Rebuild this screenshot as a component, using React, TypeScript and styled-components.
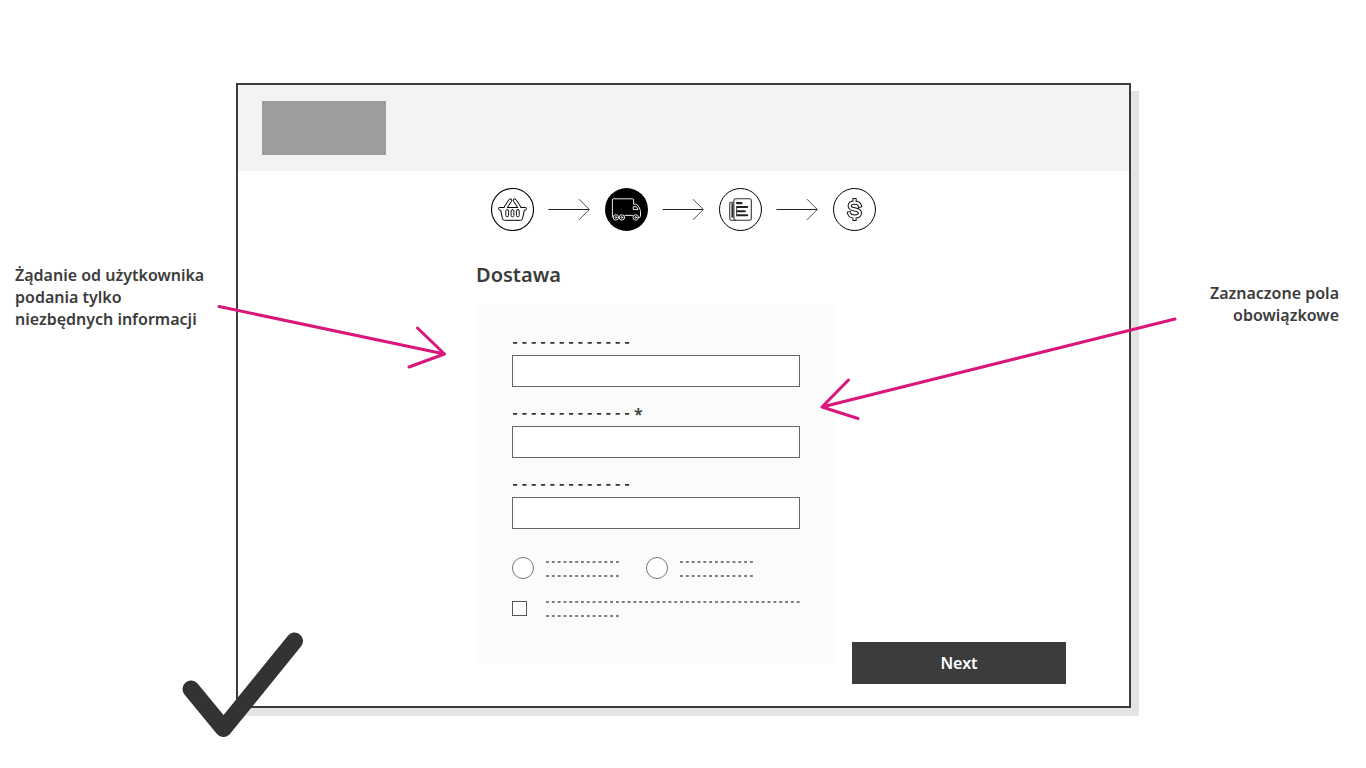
import React from "react";
import styled, { createGlobalStyle } from "styled-components";

const INK = "#3c3c3c";
const ACCENT = "#d9167b";

const GlobalStyle = createGlobalStyle`
  *, *::before, *::after { box-sizing: border-box; }
  body {
    margin: 0;
    background: #fff;
    color: ${INK};
    font-family: "Noto Sans", "Open Sans", sans-serif;
    font-size: 16px;
    line-height: 22px;
  }
`;

const Page = styled.main`
  display: grid;
  grid-template-columns: 236px minmax(0, 1fr) 235px;
  align-items: start;
  padding: 83px 0 48px;
`;

const Note = styled.p<{ $side: "left" | "right" }>`
  margin: 0;
  font-weight: 600;
  text-align: ${({ $side }) => $side};
  padding: ${({ $side }) => ($side === "left" ? "181px 30px 0 15px" : "199px 27px 0 60px")};
`;

const Window = styled.section`
  position: relative;
  border: 2px solid ${INK};
  background: #fff;
  box-shadow: 8px 8px 0 #e4e4e4;
`;

const Header = styled.header`
  padding: 16px 24px;
  background: #f3f3f3;
`;

const Logo = styled.div`
  width: 124px;
  height: 54px;
  background: #9d9d9d;
`;

const Steps = styled.ol`
  display: flex;
  justify-content: center;
  align-items: center;
  gap: 14px;
  margin: 0;
  padding: 17px 0 0;
  list-style: none;
`;

const Step = styled.li`
  display: flex;
  align-items: center;
  gap: 14px;
`;

const StepIcon = styled.svg`
  display: block;
  width: 43px;
  height: 43px;
  fill: none;
  stroke-linecap: round;
  stroke-linejoin: round;
`;

const StepArrow = styled.svg`
  display: block;
  width: 43px;
  height: 23px;
  fill: none;
  stroke: #222;
`;

const Content = styled.div`
  display: grid;
  grid-template-columns: minmax(0, 238fr) 360px minmax(0, 293fr);
  align-items: end;
  padding: 30px 0 22px;
`;

const Delivery = styled.div`
  grid-column: 2;
  padding-bottom: 20px;
`;

const Title = styled.h1`
  margin: 0 0 15px;
  font-size: 20px;
  font-weight: 600;
  line-height: 28px;
`;

const Panel = styled.form`
  position: relative;
  padding: 27px 36px 47px;
  background: #fbfbfb;
`;

const Fields = styled.div`
  display: grid;
  gap: 15px;
`;

const FieldLabel = styled.label`
  display: flex;
  align-items: center;
  gap: 4px;
  height: 24px;
  padding-left: 1px;
  font-weight: 600;
`;

const TextInput = styled.input`
  display: block;
  width: 100%;
  height: 32px;
  margin: 0;
  padding: 0 8px;
  border: 1px solid #666;
  border-radius: 0;
  background: #fff;
  font: inherit;
  color: inherit;
`;

const Radios = styled.div`
  display: grid;
  grid-template-columns: 134px 1fr;
  margin-top: 28px;
`;

const Option = styled.div`
  display: grid;
  grid-template-columns: 34px 1fr;
  align-items: center;
`;

const ConsentOption = styled(Option)`
  margin-top: 20px;
`;

const Radio = styled.input`
  appearance: none;
  width: 22px;
  height: 22px;
  margin: 0;
  border: 1px solid #777;
  border-radius: 50%;
  background: #fff;
  &:checked { background: ${INK}; box-shadow: inset 0 0 0 4px #fff; }
`;

const Checkbox = styled.input`
  appearance: none;
  width: 15px;
  height: 15px;
  margin: 0;
  border: 1px solid #555;
  background: #fff;
  &:checked { background: ${INK}; box-shadow: inset 0 0 0 3px #fff; }
`;

const OptionLabel = styled.label`
  display: grid;
  gap: 12px;
  padding-top: 2px;
`;

const DashSvg = styled.svg`
  display: block;
  flex: none;
`;

const NextButton = styled.button`
  width: 214px;
  height: 42px;
  margin-left: 16px;
  border: 0;
  background: ${INK};
  color: #fff;
  font: inherit;
  font-weight: 600;
  cursor: pointer;
`;

const Pointer = styled.svg<{ $side: "left" | "right" }>`
  position: absolute;
  top: ${({ $side }) => ($side === "left" ? "0" : "10px")};
  ${({ $side }) => ($side === "left" ? "right: calc(100% + 28px);" : "left: calc(100% - 18px);")}
  fill: none;
  stroke: ${ACCENT};
  stroke-width: 3;
  stroke-linecap: round;
  stroke-linejoin: round;
  pointer-events: none;
`;

const CheckMark = styled.svg`
  position: absolute;
  left: -58px;
  bottom: -34px;
  fill: none;
  stroke: #333;
  stroke-width: 17;
  stroke-linecap: round;
  stroke-linejoin: round;
`;

function LabelDashes() {
  return (
    <DashSvg width="117" height="2" aria-hidden="true">
      <path d="M0 0.9H117" stroke="#333" strokeWidth="1.8" strokeDasharray="4.2 5.13" />
    </DashSvg>
  );
}

function TextDashes({ width }: { width: number }) {
  return (
    <DashSvg width={width} height="2" aria-hidden="true">
      <path d={`M0 1H${width}`} stroke="#555" strokeWidth="1.5" strokeDasharray="2.9 2.93" />
    </DashSvg>
  );
}

function Field({ id, required }: { id: string; required?: boolean }) {
  return (
    <div>
      <FieldLabel htmlFor={id}>
        <LabelDashes />
        {required && <span>*</span>}
      </FieldLabel>
      <TextInput id={id} name={id} type="text" required={required} />
    </div>
  );
}

function RadioOption({ id }: { id: string }) {
  return (
    <Option>
      <Radio id={id} type="radio" name="method" value={id} />
      <OptionLabel htmlFor={id}>
        <TextDashes width={73} />
        <TextDashes width={73} />
      </OptionLabel>
    </Option>
  );
}

function BasketIcon() {
  return (
    <StepIcon viewBox="0 0 43 43" stroke="#000" aria-hidden="true">
      <circle cx="21.5" cy="21.5" r="21" strokeWidth="1.1" />
      <g strokeWidth="1">
        <path d="M13 19.5H8.3Q7.5 19.5 7.6 20.4L7.8 21.5Q8 22.2 8.8 22.2H9.7L11.5 30.8Q11.9 32.3 13.4 32.3H29.6Q31.1 32.3 31.5 30.8L33.3 22.2H34.2Q35 22.2 35.2 21.5L35.4 20.4Q35.5 19.5 34.7 19.5H30" />
        <path d="M16.4 19.5H26.6" />
        <path d="M12.9 19.5L18 11.5Q18.9 10.3 20.2 11.1Q21.3 12 20.5 13.2L16.4 19.5" />
        <path d="M30.1 19.5L25 11.5Q24.1 10.3 22.8 11.1Q21.7 12 22.5 13.2L26.6 19.5" />
      </g>
      <g strokeWidth="0.9">
        <rect x="14.8" y="21.6" width="2.8" height="7.2" rx="1.4" />
        <rect x="20.1" y="21.6" width="2.8" height="7.2" rx="1.4" />
        <rect x="25.4" y="21.6" width="2.8" height="7.2" rx="1.4" />
      </g>
    </StepIcon>
  );
}

function TruckIcon() {
  return (
    <StepIcon viewBox="0 0 43 43" stroke="#fff" aria-hidden="true">
      <circle cx="21.5" cy="21.5" r="21.5" fill="#000" stroke="none" />
      <g strokeWidth="0.9">
        <path d="M8 29.5Q7.4 29.3 7.4 28.5V12Q7.4 10.8 8.6 10.8H27.4Q28.6 10.8 28.6 12V16.2H30.4Q32.4 16.4 33.6 18.6L35 21.4Q35.5 22.4 35.5 23.5V28.2Q35.5 29.5 34 29.5" />
        <path d="M20 27.4H27.6" />
        <path d="M28.6 18.7H31Q32.4 19.1 33 21.5H28.6Z" />
        <circle cx="10.9" cy="29.4" r="2.7" />
        <circle cx="10.9" cy="29.4" r="0.8" />
        <circle cx="16.9" cy="29.4" r="2.7" />
        <circle cx="16.9" cy="29.4" r="0.8" />
        <circle cx="30.7" cy="29.4" r="2.7" />
        <circle cx="30.7" cy="29.4" r="0.8" />
      </g>
    </StepIcon>
  );
}

function DocumentIcon() {
  return (
    <StepIcon viewBox="0 0 43 43" stroke="#000" aria-hidden="true">
      <circle cx="21.5" cy="21.5" r="21" strokeWidth="1" />
      <rect x="14.9" y="10.7" width="17.4" height="21.5" rx="1.8" strokeWidth="1.1" stroke="#333" />
      <path d="M14 14.2H12.2Q10.7 14.2 10.7 15.7V30.4Q10.7 32.2 12.5 32.2H17" strokeWidth="1.1" stroke="#333" />
      <path d="M13.4 15.2V29.6" strokeWidth="2" strokeLinecap="butt" stroke="#333" />
      <path d="M18 15.1H22.6M18 19H28.2M18 23.2H25.8M18 27.3H28.2" strokeWidth="2.1" stroke="#222" />
      <path d="M17.6 18.4V28" strokeWidth="1" stroke="#444" />
    </StepIcon>
  );
}

function DollarIcon() {
  const curve =
    "M21.5 12.2V14.5M21.5 28.5V30.900M26.8 17.6Q26 14.6 21.7 14.6Q16.7 14.6 16.7 17.9Q16.7 20.500 21.6 21.4Q26.900 22.3 26.900 25.1Q26.900 28.5 21.7 28.5Q16.900 28.5 16.2 25.4";
  return (
    <StepIcon viewBox="0 0 43 43" aria-hidden="true">
      <circle cx="21.5" cy="21.5" r="21" strokeWidth="1" stroke="#000" />
      <path d={curve} stroke="#111" strokeWidth="4.2" strokeLinecap="square" />
      <path d={curve} stroke="#fff" strokeWidth="2.2" strokeLinecap="square" />
    </StepIcon>
  );
}

const steps = [BasketIcon, TruckIcon, DocumentIcon, DollarIcon];

export default function App() {
  return (
    <>
      <GlobalStyle />
      <Page>
        <Note $side="left">Żądanie od użytkownika podania tylko niezbędnych informacji</Note>
        <Window>
          <Header>
            <Logo />
          </Header>
          <Steps>
            {steps.map((Icon, i) => (
              <Step key={i} aria-current={i === 1 ? "step" : undefined}>
                <Icon />
                {i < steps.length - 1 && (
                  <StepArrow viewBox="0 0 43 23" aria-hidden="true">
                    <path d="M0.5 11.5H41" />
                    <path d="M31 1.2L41.3 11.5L31 21.8" strokeWidth="0.8" />
                  </StepArrow>
                )}
              </Step>
            ))}
          </Steps>
          <Content>
            <Delivery>
              <Title>Dostawa</Title>
              <Panel id="delivery">
                <Fields>
                  <Field id="name" />
                  <Field id="address" required />
                  <Field id="city" />
                </Fields>
                <Radios>
                  <RadioOption id="courier" />
                  <RadioOption id="pickup" />
                </Radios>
                <ConsentOption>
                  <Checkbox id="consent" name="consent" type="checkbox" />
                  <OptionLabel htmlFor="consent">
                    <TextDashes width={254} />
                    <TextDashes width={73} />
                  </OptionLabel>
                </ConsentOption>
                <Pointer $side="left" width="232" height="68" aria-hidden="true">
                  <path d="M3 2.5L228.5 50M201.5 24L228.5 50L193 63" />
                </Pointer>
                <Pointer $side="right" width="362" height="112" aria-hidden="true">
                  <path d="M357 5L4 93M30.5 66L4 93L40 104.5" />
                </Pointer>
              </Panel>
            </Delivery>
            <NextButton type="submit" form="delivery">
              Next
            </NextButton>
          </Content>
          <CheckMark width="128" height="112" aria-hidden="true">
            <path d="M11 61L43.5 100.5L114.5 13" />
          </CheckMark>
        </Window>
        <Note $side="right">Zaznaczone pola obowiązkowe</Note>
      </Page>
    </>
  );
}
